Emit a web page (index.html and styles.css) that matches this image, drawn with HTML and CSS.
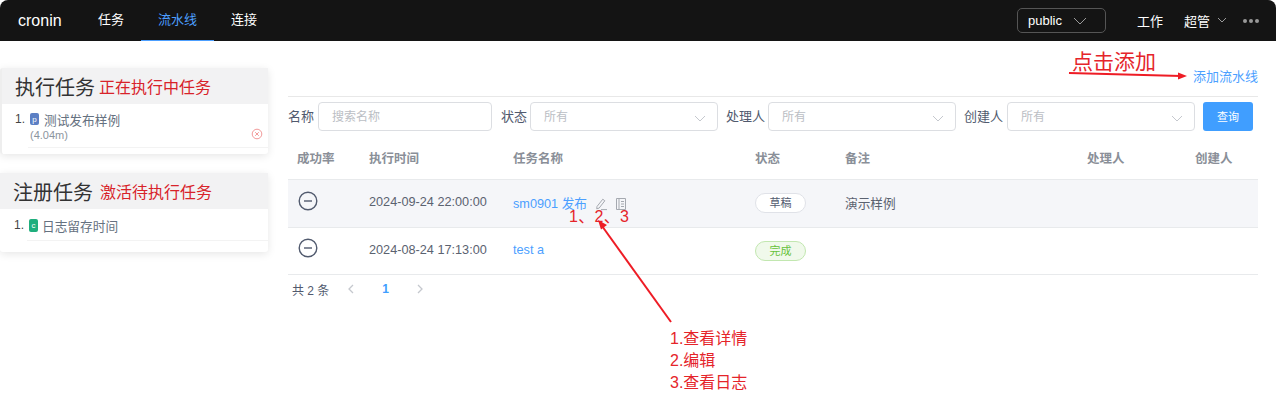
FILE: index.html
```html
<!DOCTYPE html>
<html lang="zh-CN">
<head>
  <meta charset="UTF-8">
  <meta name="viewport" content="width=device-width, initial-scale=1.0">
  <title>cronin</title>
  <link rel="stylesheet" href="styles.css">
</head>
<body>

  <header class="topbar">
    <div class="logo">cronin</div>
    <nav class="nav">
      <a class="nav-item">任务</a>
      <a class="nav-item active">流水线</a>
      <a class="nav-item">连接</a>
    </nav>
    <div class="topbar-right">
      <div class="env-select">
        <span>public</span>
        <svg class="chev" width="14" height="8" viewBox="0 0 14 8"><path d="M1 1l6 6 6-6"/></svg>
      </div>
      <span class="top-link">工作</span>
      <span class="top-user">超管</span>
      <svg class="chev small" width="10" height="6" viewBox="0 0 10 6"><path d="M1 1l4 4 4-4"/></svg>
      <span class="dots"><i></i><i></i><i></i></span>
    </div>
  </header>

  <div class="page">
    <aside class="side">
      <section class="card card-run">
        <div class="card-head">
          <span class="card-title">执行任务</span>
          <span class="card-note">正在执行中任务</span>
        </div>
        <div class="task">
          <div class="task-line">
            <span class="num">1.</span>
            <span class="type type-p">p</span>
            <span class="task-name">测试发布样例</span>
          </div>
          <div class="task-time">(4.04m)</div>
          <svg class="task-stop" width="12" height="12" viewBox="0 0 12 12"><circle cx="6" cy="6" r="4.8"/><path d="M4.2 4.2l3.6 3.6M7.8 4.2l-3.6 3.6"/></svg>
        </div>
      </section>

      <section class="card card-reg">
        <div class="card-head">
          <span class="card-title">注册任务</span>
          <span class="card-note">激活待执行任务</span>
        </div>
        <div class="task">
          <div class="task-line">
            <span class="num">1.</span>
            <span class="type type-c">c</span>
            <span class="task-name">日志留存时间</span>
          </div>
        </div>
      </section>
    </aside>

    <main class="main">
      <div class="actions"><a class="add-link">添加流水线</a></div>

      <div class="filters">
        <label class="lbl-wide">名称</label>
        <div class="field w-name placeholder">搜索名称</div>
        <label>状态</label>
        <div class="field w-sel placeholder">所有<svg class="arrow" width="12" height="7" viewBox="0 0 12 7"><path d="M1 1l5 5 5-5"/></svg></div>
        <label>处理人</label>
        <div class="field w-sel placeholder">所有<svg class="arrow" width="12" height="7" viewBox="0 0 12 7"><path d="M1 1l5 5 5-5"/></svg></div>
        <label class="lbl-wide">创建人</label>
        <div class="field w-sel placeholder">所有<svg class="arrow" width="12" height="7" viewBox="0 0 12 7"><path d="M1 1l5 5 5-5"/></svg></div>
        <button class="btn-query">查询</button>
      </div>

      <table class="grid">
        <colgroup>
          <col class="c1"><col class="c2"><col class="c3"><col class="c4"><col class="c5"><col class="c6"><col>
        </colgroup>
        <thead>
          <tr>
            <th>成功率</th><th>执行时间</th><th>任务名称</th><th>状态</th><th>备注</th><th>处理人</th><th>创建人</th>
          </tr>
        </thead>
        <tbody>
          <tr class="hover">
            <td><svg class="rate" width="20" height="20" viewBox="0 0 20 20"><circle cx="10" cy="10" r="8.8"/><path d="M6 10h8"/></svg></td>
            <td>2024-09-24 22:00:00</td>
            <td class="name-cell">
              <a class="link">sm0901 发布</a>
              <svg class="op" width="14" height="14" viewBox="0 0 14 14"><path d="M3 9.5L8.8 2.2l2 1.6-5.7 7.3-2.4.7zM7 12.6h6"/></svg>
              <svg class="op" width="14" height="14" viewBox="0 0 14 14"><path d="M2.5 1.5h9v11h-9zM5 1.5v11M7 4.5h3M7 7h3M7 9.5h3"/></svg>
            </td>
            <td class="tag-cell"><span class="tag">草稿</span></td>
            <td>演示样例</td>
            <td></td>
            <td></td>
          </tr>
          <tr>
            <td><svg class="rate" width="20" height="20" viewBox="0 0 20 20"><circle cx="10" cy="10" r="8.8"/><path d="M6 10h8"/></svg></td>
            <td>2024-08-24 17:13:00</td>
            <td><a class="link">test a</a></td>
            <td class="tag-cell"><span class="tag done">完成</span></td>
            <td></td>
            <td></td>
            <td></td>
          </tr>
        </tbody>
      </table>

      <div class="pager">
        <span class="total">共 2 条</span>
        <svg class="pg-arrow" width="8" height="10" viewBox="0 0 8 10"><path d="M6 1L2 5l4 4"/></svg>
        <span class="pg-num">1</span>
        <svg class="pg-arrow" width="8" height="10" viewBox="0 0 8 10"><path d="M2 1l4 4-4 4"/></svg>
      </div>
    </main>
  </div>

  <!-- annotations drawn on top of the screenshot -->
  <div class="note note-add">点击添加</div>
  <div class="note note-ops">1、2、3</div>
  <div class="note note-list">1.查看详情<br>2.编辑<br>3.查看日志</div>
  <svg class="marks" width="1276" height="401" viewBox="0 0 1276 401">
    <path d="M1069 73l112 3"/>
    <path class="head" d="M1187 76l-9-3.500v7z"/>
    <path d="M671 322L602 226"/>
    <path class="head" d="M598 220l9 5-6 4.500z"/>
  </svg>

</body>
</html>
```

FILE: styles.css
```css
* {
  box-sizing: border-box;
}

html, body {
  height: 401px;
  overflow: hidden;
}

body {
  margin: 0;
  background-color: #fff;
  color: #515a6e;
  font-family: "Liberation Sans", "Noto Sans CJK SC", sans-serif;
  font-size: 13px;
  position: relative;
}

/* top bar */
.topbar {
  height: 41px;
  display: flex;
  align-items: center;
  background-color: #141414;
  color: #fff;
  border-radius: 8px 8px 0 0;
  padding-left: 18px;
}

.logo {
  font-size: 16px;
  width: 63px;
}

.nav {
  display: flex;
  height: 41px;
}

.nav-item {
  padding: 0 17px;
  line-height: 40px;
  white-space: nowrap;
}

.nav-item.active {
  color: #4c9fff;
  border-bottom: 1px solid #4c9fff;
}

.topbar-right {
  margin-left: auto;
  display: flex;
  align-items: center;
  padding-right: 17px;
}

.env-select {
  width: 89px;
  height: 25px;
  margin-right: 31px;
  padding: 0 18px 0 10px;
  display: flex;
  align-items: center;
  justify-content: space-between;
  border: 1px solid #555;
  border-radius: 5px;
}

.chev {
  fill: none;
  stroke: #9a9a9a;
  stroke-width: 1;
}

.chev.small {
  margin: 0 16px 2px 7px;
}

.top-link {
  margin-right: 21px;
}

.dots {
  display: flex;
  gap: 2px;
}

.dots i {
  width: 4px;
  height: 4px;
  border-radius: 50%;
  background-color: #999;
}

/* page */
.page {
  display: flex;
  padding-top: 27px;
}

.side {
  width: 268px;
  flex-shrink: 0;
}

.card {
  background-color: #fff;
  border-radius: 3px;
  box-shadow: 0 2px 8px rgba(0, 0, 0, 0.1);
}

.card-run {
  height: 86px;
  border-left: 2px solid #eee;
  margin-bottom: 19px;
}

.card-reg {
  height: 79px;
}

.card-head {
  height: 36px;
  display: flex;
  align-items: center;
  background-color: #f2f2f3;
  padding-left: 13px;
}

.card-title {
  font-size: 20px;
  color: #333;
  margin-right: 4px;
}

.card-reg .card-title {
  margin-right: 7px;
}

.card-note {
  font-size: 16px;
  color: #d8232a;
}

.task {
  position: relative;
  margin-left: 26px;
  padding: 6px 0 0;
  height: 44px;
  border-bottom: 1px solid #f3f3f3;
  font-size: 12.700px;
}

.card-reg .task {
  height: 32px;
  margin-left: 27px;
  padding-top: 7px;
}

.task-line {
  display: flex;
  align-items: center;
  height: 18px;
}

.num {
  margin-left: -13px;
  width: 15px;
  color: #444;
  font-size: 12px;
}

.type {
  width: 9px;
  height: 12px;
  margin-right: 5px;
  border-radius: 2px;
  color: #fff;
  font-size: 8px;
  line-height: 13px;
  text-align: center;
}

.type-p {
  background-color: #5c7fc4;
}

.type-c {
  height: 13px;
  margin-right: 4px;
  background-color: #1fae7d;
}

.task-name {
  color: #657180;
}

.task-time {
  margin-top: 1px;
  padding-left: 2px;
  font-size: 11px;
  line-height: 12px;
  color: #8b949e;
}

.task-stop {
  position: absolute;
  right: 5px;
  top: 24px;
  fill: none;
  stroke: #f29a9a;
}

/* main */
.main {
  width: 970px;
  margin-left: 20px;
}

.actions {
  height: 29px;
  border-bottom: 1px solid #e8e8e8;
  text-align: right;
  line-height: 17px;
}

.add-link, .link {
  color: #4c9fff;
}

.filters {
  display: flex;
  align-items: center;
  height: 29px;
  margin-top: 5px;
}

.filters label {
  color: #515a6e;
  margin-right: 3px;
  white-space: nowrap;
  margin-top: -3px;
}

.filters label.lbl-wide {
  margin-right: 4px;
}

.field {
  position: relative;
  height: 29px;
  margin-right: 8px;
  padding: 0 13px;
  border: 1px solid #dcdee2;
  border-radius: 4px;
  line-height: 28px;
  font-size: 12px;
}

.placeholder {
  color: #bbbec4;
}

.w-name {
  width: 174px;
  margin-right: 9px;
}

.w-sel {
  width: 188px;
}

.field .arrow {
  position: absolute;
  right: 11px;
  top: 12px;
  fill: none;
  stroke: #c5c8ce;
}

.btn-query {
  width: 50px;
  height: 29px;
  padding: 0 0 2px;
  border: none;
  border-radius: 3px;
  background-color: #409eff;
  color: #fff;
  font-family: inherit;
  font-size: 11px;
}

.grid {
  width: 100%;
  margin-top: 7px;
  border-collapse: collapse;
  table-layout: fixed;
}

.c1 { width: 72px; }
.c2 { width: 144px; }
.c3 { width: 242px; }
.c4 { width: 90px; }
.c5 { width: 242px; }
.c6 { width: 108px; }

.grid th, .grid td {
  padding: 0 0 2px 9px;
  text-align: left;
  border-bottom: 1px solid #e8eaec;
  white-space: nowrap;
}

.grid th {
  height: 41px;
  color: #8a8f98;
  font-weight: bold;
  font-size: 12.500px;
}

.grid td {
  height: 47px;
  font-size: 12.700px;
  color: #5b6270;
}

.grid td.tag-cell {
  padding-bottom: 0;
}

.grid tr.hover td {
  height: 48px;
  background-color: #f5f6f9;
}

.rate {
  display: block;
  margin: 0 0 3px 1px;
  fill: none;
  stroke: #515a6e;
  stroke-width: 1.4;
}

.name-cell .op {
  vertical-align: -3px;
  margin-left: 3px;
  fill: none;
  stroke: #a5a9b0;
}

.name-cell .op + .op {
  margin-left: 3px;
}

.tag {
  display: inline-block;
  width: 51px;
  height: 20px;
  border: 1px solid #e0e2e8;
  border-radius: 10px;
  background-color: #fff;
  color: #515a6e;
  font-size: 11px;
  line-height: 18px;
  text-align: center;
}

.tag.done {
  border-color: #c2e7b0;
  background-color: #f0f9eb;
  color: #67c23a;
}

.pager {
  display: flex;
  align-items: center;
  height: 29px;
  padding-left: 4px;
  font-size: 12px;
  color: #515a6e;
}

.total {
  margin-right: 18px;
}

.pg-arrow {
  fill: none;
  stroke: #c5c8ce;
  stroke-width: 1.300;
}

.pg-num {
  margin: 0 27px 0 27px;
  color: #409eff;
  font-weight: bold;
}

/* annotations */
.note {
  position: absolute;
  color: #e5242a;
  white-space: nowrap;
}

.note-add {
  left: 1072px;
  top: 45px;
  font-size: 21px;
}

.note-ops {
  left: 569px;
  top: 203px;
  font-size: 16px;
  letter-spacing: 0.300px;
}

.note-list {
  left: 670px;
  top: 328px;
  font-size: 16px;
  line-height: 22px;
}

.marks {
  position: absolute;
  left: 0;
  top: 0;
  pointer-events: none;
}

.marks path {
  fill: none;
  stroke: #ee1c25;
  stroke-width: 2;
}

.marks path.head {
  fill: #ee1c25;
  stroke: none;
}
```
